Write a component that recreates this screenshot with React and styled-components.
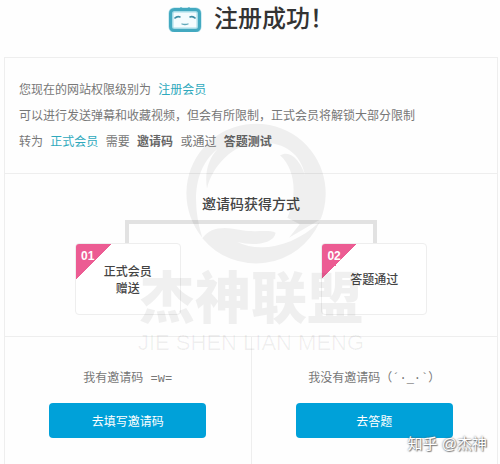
import React from "react";
import styled, { createGlobalStyle } from "styled-components";

const methods = [
    { no: "01", lines: ["正式会员", "赠送"] },
    { no: "02", lines: ["答题通过"] },
];

const choices = [
    { text: "我有邀请码 =w=", button: "去填写邀请码" },
    { text: "我没有邀请码（´·_·`）", button: "去答题" },
];

const TvIcon = ()=>(
    <svg width="34" height="26" viewBox="0 0 34 26" aria-hidden="true">
        <path d="M13 2l2 2M21 2l-2 2" stroke="#3a9db5" strokeWidth="2" strokeLinecap="round" />
        <rect x="3" y="4" width="28" height="20" rx="3" fill="#f4fcfe" stroke="#a5dbe7" strokeWidth="5" />
        <rect x="2.5" y="3.5" width="29" height="21" rx="4" fill="none" stroke="#43a9c0" strokeWidth="3" />
        <path d="M7 12q3-2 5-1M27 12q-3-2-5-1" fill="none" stroke="#3f8fa5" strokeWidth="1.6" strokeLinecap="round" />
        <path d="M14 18q3 1 6 0" fill="none" stroke="#5fa9ba" strokeWidth="1.3" strokeLinecap="round" />
    </svg>
);

const RingLogo = ()=>(
    <svg width="142" height="144" viewBox="18 15 426 432" aria-hidden="true">
        <path d="M70 365A209 209 0 1 1 425 310L385 333L330 365L362 325L325 305C355 240 350 160 303 118C335 100 365 135 378 178C365 110 310 75 235 80C160 85 100 150 84 218C76 170 88 130 115 100C40 160 40 270 70 365Z" fill="currentColor" />
        <path d="M70 367C95 330 140 332 190 343C230 350 270 340 290 350C285 385 220 390 175 378C240 410 340 395 422 318A209 209 0 0 1 70 367Z" fill="currentColor" />
    </svg>
);

const App = ()=>{
    return(
        <>
            <GlobalStyle />
            <Page>
                <Header>
                    <TvIcon />
                    <h1>注册成功！</h1>
                </Header>
                <Panel>
                    <Intro>
                        <p>您现在的网站权限级别为 <a href="#member">注册会员</a></p>
                        <p>可以进行发送弹幕和收藏视频，但会有所限制，正式会员将解锁大部分限制</p>
                        <p>转为 <a href="#formal">正式会员</a> 需要 <strong>邀请码</strong> 或通过 <strong>答题测试</strong></p>
                    </Intro>
                    <Methods>
                        <h2>邀请码获得方式</h2>
                        <Tree>
                            <Branch />
                            <Cards>
                                {methods.map(({ no, lines })=>(
                                    <Card key={no}>
                                        <Corner><span>{no}</span></Corner>
                                        {lines.map((line)=><div key={line}>{line}</div>)}
                                    </Card>
                                ))}
                            </Cards>
                        </Tree>
                    </Methods>
                    <Choices>
                        {choices.map(({ text, button })=>(
                            <Choice key={button}>
                                <p>{text}</p>
                                <Button type="button">{button}</Button>
                            </Choice>
                        ))}
                    </Choices>
                    <Watermark>
                        <RingLogo />
                        <strong>杰神联盟</strong>
                        <span>JIE SHEN LIAN MENG</span>
                    </Watermark>
                    <Credit>知乎 @杰神</Credit>
                </Panel>
            </Page>
        </>
    )
};export default App;

const GlobalStyle = createGlobalStyle`
*{
    box-sizing:border-box;
}
body{
    margin:0;
    background-color:#fefefe;
    color:#777;
    font-family:"Liberation Sans", "Noto Sans CJK SC", sans-serif;
    font-size:12px;
}
h1, h2, p{
    margin:0;
}
`;

const Page = styled.main`
padding:0 2px 0 4px;
`;

const Header = styled.header`
display:flex;
justify-content:center;
align-items:center;
gap:12px;
height:57px;
padding-bottom:20px;
h1{
    color:#333;
    font-size:24px;
    line-height:36px;
    font-weight:500;
}
`;

const Panel = styled.section`
position:relative;
border:1px solid #eee;
border-bottom:0;
`;

const Intro = styled.div`
padding:19px 14px 18px;
line-height:26px;
a{
    margin:0 4px;
    color:#2fa9bd;
    text-decoration:none;
}
strong{
    margin:0 4px;
    color:#666;
    font-weight:bold;
}
`;

const Methods = styled.div`
padding:20px 16px 21px;
border-top:1px solid #eee;
border-bottom:1px solid #eee;
h2{
    color:#444;
    font-size:14px;
    line-height:20px;
    font-weight:500;
    text-align:center;
}
`;

const Tree = styled.div`
max-width:352px;
margin:6px auto 0;
`;

const Branch = styled.div`
height:23px;
margin:0 50px;
border:4px solid #e2e2e2;
border-bottom:0;
`;

const Cards = styled.div`
display:flex;
justify-content:space-between;
`;

const Card = styled.div`
position:relative;
display:flex;
flex-direction:column;
justify-content:center;
align-items:center;
width:30%;
min-height:72px;
padding-top:3px;
border:1px solid #eee;
border-radius:4px;
background-color:#fff;
color:#444;
line-height:17px;
font-weight:500;
overflow:hidden;
`;

const Corner = styled.div`
position:absolute;
top:-1px;
left:-1px;
width:37px;
height:37px;
padding:6px;
background:linear-gradient(135deg, #ec5c93 50%, transparent 50%);
color:#fff;
line-height:14px;
font-weight:bold;
`;

const Choices = styled.div`
display:flex;
`;

const Choice = styled.div`
flex:1;
display:flex;
flex-direction:column;
align-items:center;
gap:14px;
padding:32px 0 26px;
& + &{
    border-left:1px solid #eee;
}
p{
    font-family:"Liberation Mono", "Noto Sans CJK SC", monospace;
    line-height:20px;
}
`;

const Button = styled.button`
width:64%;
height:35px;
border:0;
border-radius:4px;
background-color:#00a1d9;
color:#fff;
font-family:inherit;
font-size:12px;
cursor:pointer;
`;

const Watermark = styled.div`
position:absolute;
top:63px;
left:0;
right:0;
display:flex;
flex-direction:column;
align-items:center;
color:rgba(0, 0, 0, .06);
pointer-events:none;
svg{
    margin-left:10px;
}
strong{
    font-size:56px;
    line-height:68px;
    font-weight:900;
}
span{
    font-size:22px;
    line-height:20px;
}
`;

const Credit = styled.div`
position:absolute;
right:10px;
bottom:10px;
color:#fff;
font-size:15px;
line-height:20px;
text-shadow:0 0 2px #555, 1px 1px 1px #888;
`;
